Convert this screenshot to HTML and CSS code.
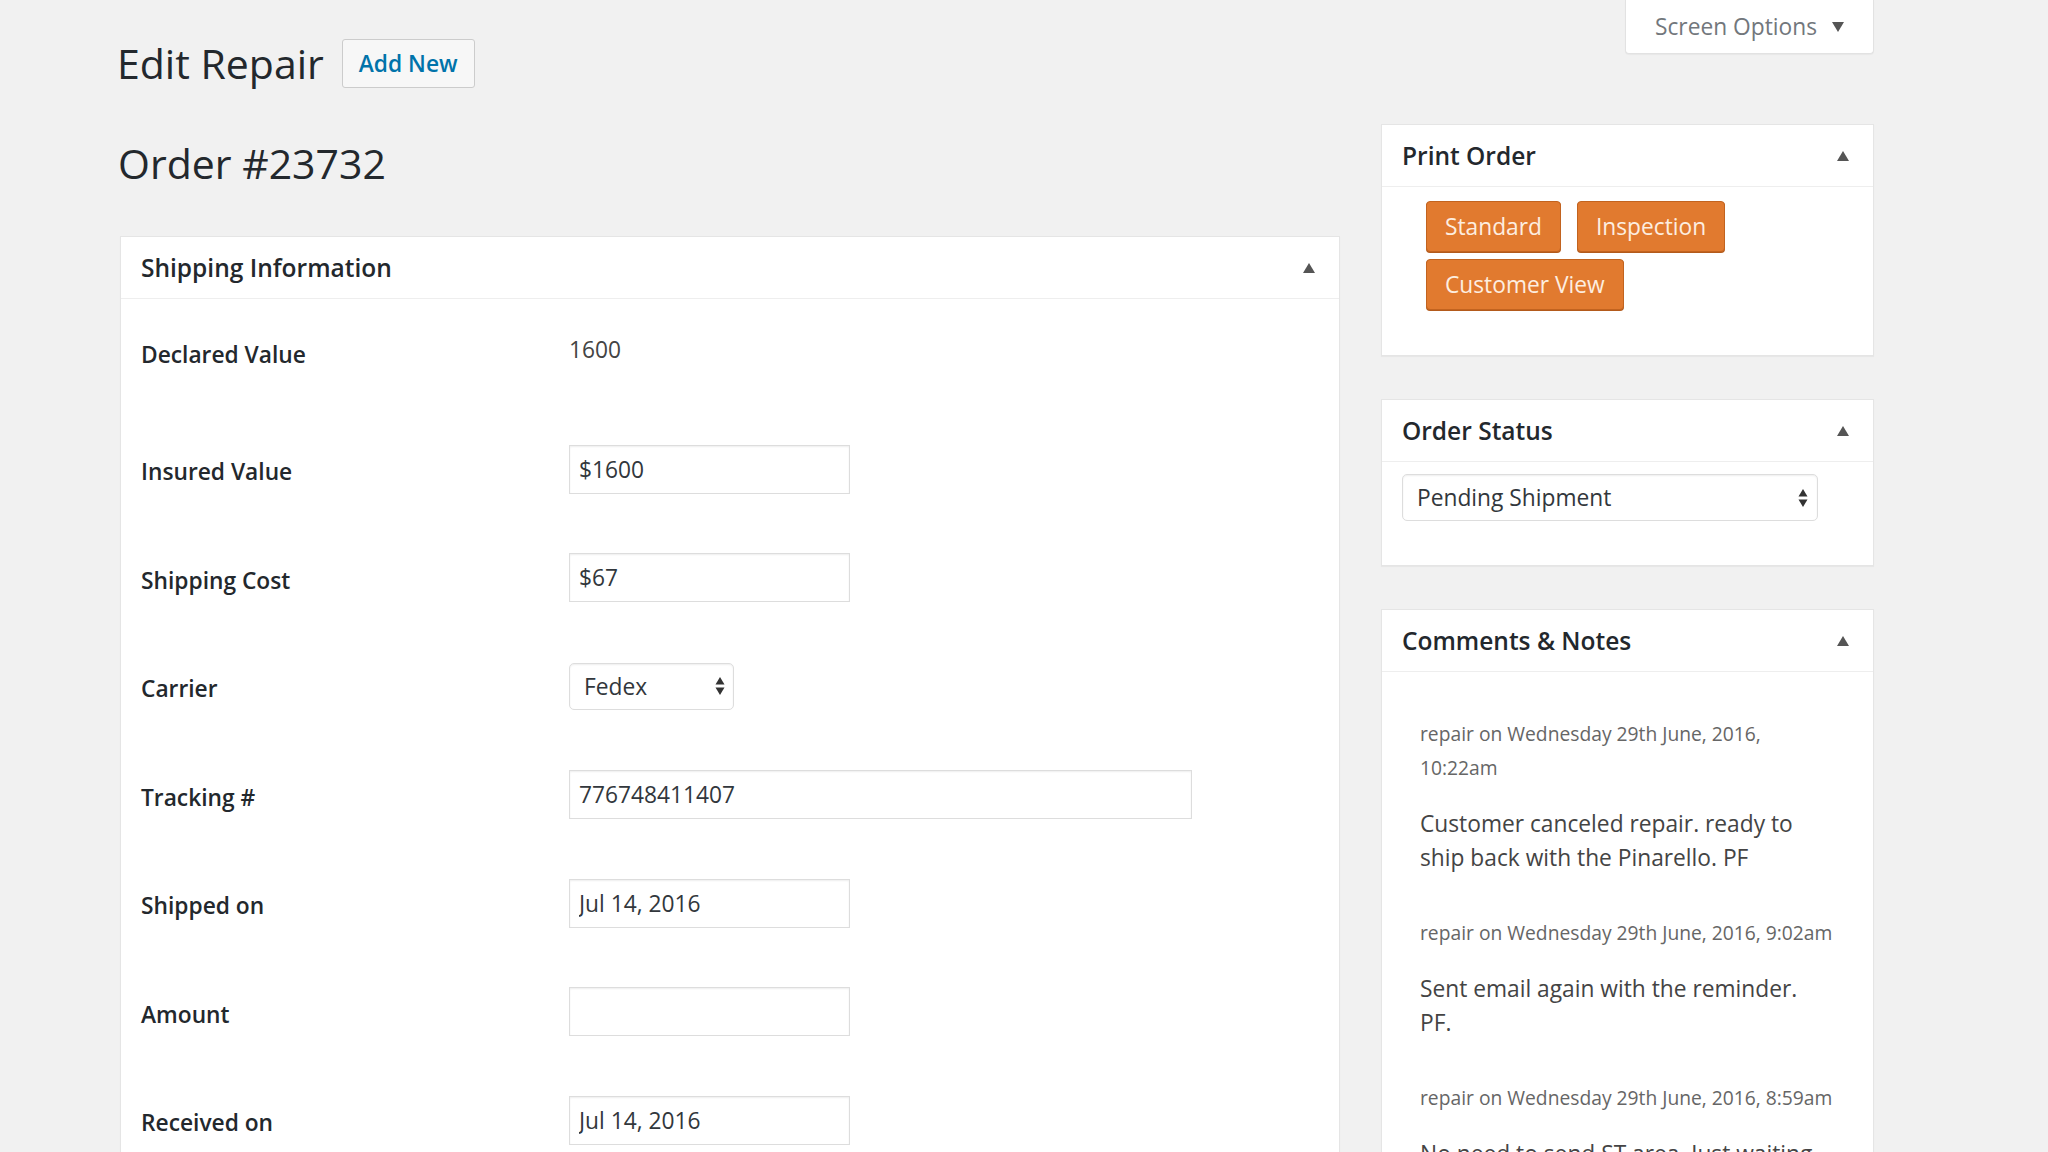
FILE: index.html
```html
<!DOCTYPE html>
<html lang="en">
<head>
<meta charset="utf-8">
<title>Edit Repair</title>
<link rel="stylesheet" href="styles.css">
</head>
<body>
<div class="wrap">
  <div class="topbar">
    <div class="title-group">
      <h1 class="page-title">Edit Repair</h1>
      <a class="add-new">Add New</a>
    </div>
    <div class="screen-options">
      <span>Screen Options</span><span class="down-tri"></span>
    </div>
  </div>

  <div class="columns">
    <div class="main">
      <h2 class="order-title">Order #23732</h2>
      <div class="postbox">
        <div class="hndle"><h3>Shipping Information</h3><span class="toggle"></span></div>
        <div class="form">
          <div class="row first">
            <div class="label">Declared Value</div>
            <div class="static">1600</div>
          </div>
          <div class="row">
            <div class="label">Insured Value</div>
            <input class="input w-short" type="text" value="$1600">
          </div>
          <div class="row">
            <div class="label">Shipping Cost</div>
            <input class="input w-short" type="text" value="$67">
          </div>
          <div class="row">
            <div class="label">Carrier</div>
            <div class="select carrier">
              <span>Fedex</span>
              <svg class="arrows" width="12" height="22" viewBox="0 0 12 22"><polygon points="1.5,9.5 6,2 10.5,9.5" fill="#333"/><polygon points="1.5,12.5 6,20 10.5,12.5" fill="#333"/></svg>
            </div>
          </div>
          <div class="row">
            <div class="label">Tracking #</div>
            <input class="input w-long" type="text" value="776748411407">
          </div>
          <div class="row">
            <div class="label">Shipped on</div>
            <input class="input w-short" type="text" value="Jul 14, 2016">
          </div>
          <div class="row">
            <div class="label">Amount</div>
            <input class="input w-short" type="text" value="">
          </div>
          <div class="row">
            <div class="label">Received on</div>
            <input class="input w-short" type="text" value="Jul 14, 2016">
          </div>
        </div>
      </div>
    </div>

    <div class="side">
      <div class="postbox">
        <div class="hndle"><h3>Print Order</h3><span class="toggle"></span></div>
        <div class="print-body">
          <a class="orange-btn">Standard</a>
          <a class="orange-btn">Inspection</a>
          <a class="orange-btn">Customer View</a>
        </div>
      </div>

      <div class="postbox">
        <div class="hndle"><h3>Order Status</h3><span class="toggle"></span></div>
        <div class="status-body">
          <div class="select status">
            <span>Pending Shipment</span>
            <svg class="arrows" width="12" height="22" viewBox="0 0 12 22"><polygon points="1.5,9.5 6,2 10.5,9.5" fill="#333"/><polygon points="1.5,12.5 6,20 10.5,12.5" fill="#333"/></svg>
          </div>
        </div>
      </div>

      <div class="postbox">
        <div class="hndle"><h3>Comments &amp; Notes</h3><span class="toggle"></span></div>
        <div class="comments-body">
          <div class="comment">
            <p class="meta">repair on Wednesday 29th June, 2016,<br>10:22am</p>
            <p class="text">Customer canceled repair. ready to<br>ship back with the Pinarello. PF</p>
          </div>
          <div class="comment">
            <p class="meta">repair on Wednesday 29th June, 2016, 9:02am</p>
            <p class="text">Sent email again with the reminder.<br>PF.</p>
          </div>
          <div class="comment">
            <p class="meta">repair on Wednesday 29th June, 2016, 8:59am</p>
            <p class="text">No need to send ST area. Just waiting<br>for the customer to confirm.</p>
          </div>
        </div>
      </div>
    </div>
  </div>
</div>
</body>
</html>
```

FILE: styles.css
```css
* { box-sizing: border-box; }

html, body {
  margin: 0;
  height: 100%;
  overflow: hidden;
}

body {
  background: #f1f1f1;
  font-family: "Open Sans", "Liberation Sans", sans-serif;
  font-size: 22.75px;
  color: #444;
}

.wrap {
  padding-left: 120px;
  padding-right: 174px;
}

/* ---------- top bar ---------- */
.topbar {
  display: flex;
  justify-content: space-between;
  align-items: flex-start;
}

.title-group {
  display: flex;
  align-items: center;
  margin-top: 37px;
  height: 52px;
  margin-left: -3px;
}

.page-title {
  margin: 0;
  font-size: 41px;
  font-weight: 400;
  line-height: 52px;
  color: #23282d;
}

.add-new {
  margin-left: 18px;
  height: 49px;
  padding: 0 16px;
  border: 1px solid #ccc;
  border-radius: 3px;
  background: #f7f7f7;
  color: #0073aa;
  font-weight: 600;
  font-size: 22.75px;
  line-height: 47px;
}

.screen-options {
  width: 249px;
  height: 54px;
  display: flex;
  align-items: center;
  justify-content: center;
  gap: 15px;
  background: #fff;
  border: 1px solid #e2e2e2;
  border-top: 0;
  border-radius: 0 0 4px 4px;
  box-shadow: 0 1px 1px rgba(0,0,0,.04);
  color: #72777c;
  font-size: 22.75px;
}

.down-tri {
  width: 0;
  height: 0;
  border-left: 6px solid transparent;
  border-right: 6px solid transparent;
  border-top: 10px solid #555;
}

/* ---------- columns ---------- */
.columns {
  display: flex;
  align-items: flex-start;
  gap: 41px;
  margin-top: 35px;
}

.main {
  flex: 1;
  min-width: 0;
}

.side {
  width: 493px;
  flex: none;
  display: flex;
  flex-direction: column;
  gap: 43px;
}

.order-title {
  margin: 13px 0 47px -2px;
  font-size: 41px;
  font-weight: 400;
  line-height: 52px;
  color: #23282d;
}

/* ---------- postbox ---------- */
.postbox {
  background: #fff;
  border: 1px solid #e5e5e5;
  box-shadow: 0 1px 1px rgba(0,0,0,.04);
}

.hndle {
  height: 62px;
  display: flex;
  align-items: center;
  justify-content: space-between;
  padding: 0 24px 0 20px;
  border-bottom: 1px solid #eee;
}

.hndle h3 {
  margin: 0;
  font-size: 24.5px;
  font-weight: 600;
  color: #23282d;
}

.toggle {
  width: 0;
  height: 0;
  border-left: 6px solid transparent;
  border-right: 6px solid transparent;
  border-bottom: 10px solid #555;
}

/* ---------- shipping form ---------- */
.form {
  padding: 0 20px;
}

.row {
  display: flex;
  align-items: center;
  height: 108.5px;
}

.row.first {
  height: 116px;
}

.label {
  width: 428px;
  flex: none;
  font-weight: 600;
  color: #23282d;
  line-height: 1.3;
  padding-top: 6px;
}

.row.first .label {
  padding-top: 0;
  padding-bottom: 4px;
}

.static {
  color: #444;
  line-height: 1.3;
  padding-bottom: 14px;
}

.input {
  height: 49px;
  margin: 0;
  border: 1px solid #ddd;
  border-radius: 0;
  box-shadow: inset 0 1px 2px rgba(0,0,0,.07);
  background: #fff;
  font-family: "Open Sans", "Liberation Sans", sans-serif;
  font-size: 22.75px;
  color: #32373c;
  padding: 0 9px;
  outline: none;
}

.w-short { width: 281px; }
.w-long { width: 623px; }

.select {
  height: 47px;
  display: flex;
  align-items: center;
  justify-content: space-between;
  border: 1px solid #ddd;
  border-radius: 5px;
  box-shadow: inset 0 1px 2px rgba(0,0,0,.07);
  background: #fff;
  color: #32373c;
  padding: 0 7px 0 14px;
}

.select.carrier { width: 165px; }
.select.status { width: 416px; padding-right: 8px; }

.arrows { flex: none; display: block; }

/* ---------- print order ---------- */
.print-body {
  display: flex;
  flex-wrap: wrap;
  gap: 7px 16px;
  padding: 14px 20px 45px 44px;
}

.orange-btn {
  height: 51px;
  padding: 0 18px;
  background: #e17a2f;
  border: 1px solid #c2631f;
  border-radius: 4px;
  box-shadow: 0 1px 0 #b35a1b;
  color: #fdeee0;
  font-size: 22.75px;
  line-height: 49px;
}

/* ---------- order status ---------- */
.status-body {
  padding: 12px 20px 44px 20px;
}

/* ---------- comments ---------- */
.comments-body {
  padding: 45px 20px 0 38px;
}

.comment {
  margin-bottom: 42px;
  white-space: nowrap;
}

.meta {
  margin: 0;
  font-size: 19.25px;
  line-height: 34px;
  color: #666;
}

.text {
  margin: 22px 0 0;
  font-size: 22.75px;
  line-height: 33.5px;
  color: #444;
}
```
